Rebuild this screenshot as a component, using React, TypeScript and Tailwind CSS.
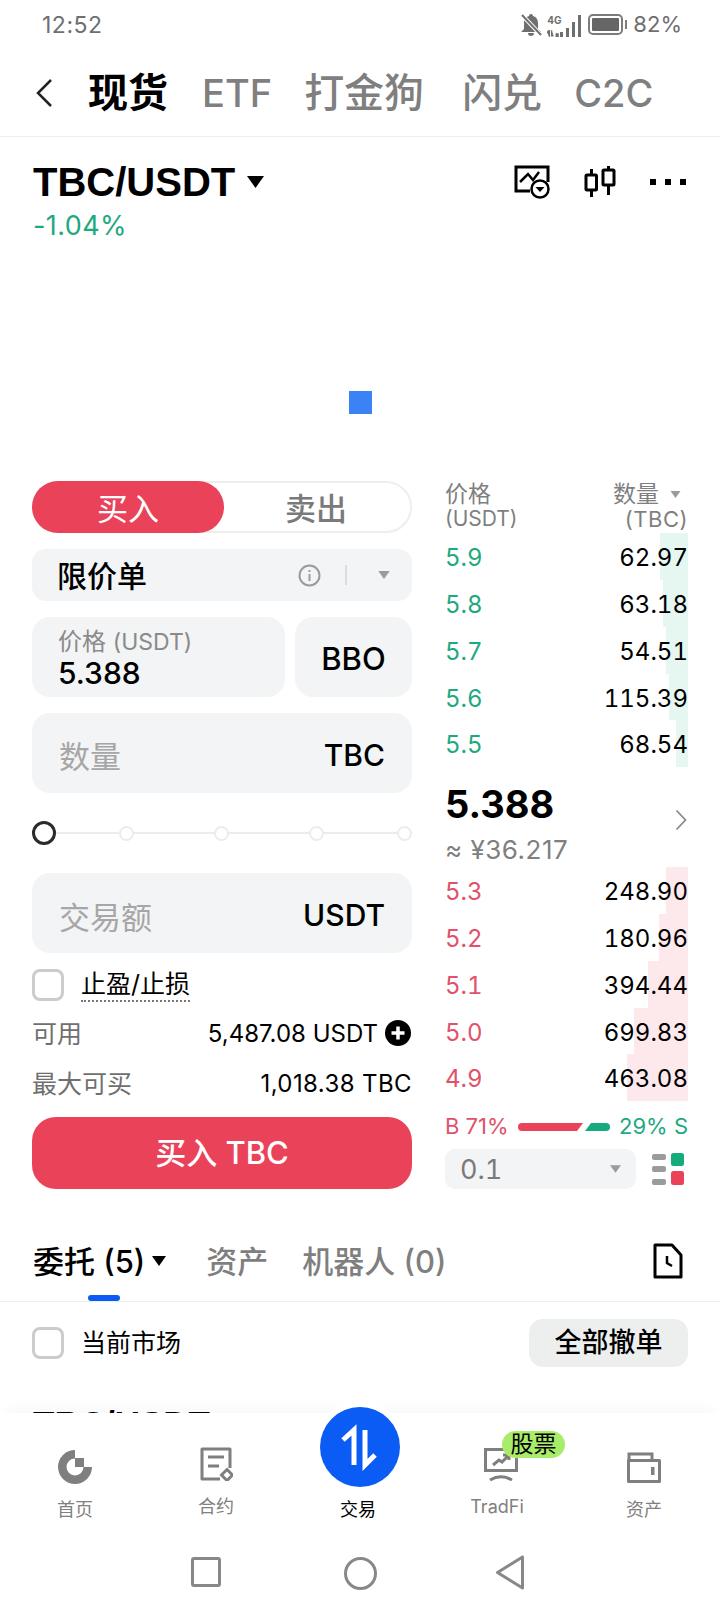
import React from "react";

const Caret = ({ w, h, color }: { w: number; h: number; color: string }) => (
  <svg width={w} height={h} viewBox="0 0 10 7"><path d="M0 0H10L5 7Z" fill={color} /></svg>
);

const asks = [["5.9", "62.97", 28], ["5.8", "63.18", 25], ["5.7", "54.51", 22], ["5.6", "115.39", 19], ["5.5", "68.54", 12]] as const;
const bids = [["5.3", "248.90", 22], ["5.2", "180.96", 29], ["5.1", "394.44", 40], ["5.0", "699.83", 54], ["4.9", "463.08", 61]] as const;

function BookRow({ p, q, w, up }: { p: string; q: string; w: number; up: boolean }) {
  return (
    <div className="relative flex h-[46.8px] items-center justify-between pt-[3px] text-[24px] tabular-nums">
      <div className={up ? "absolute top-0 right-0 bottom-0 bg-[#e6f7f1]" : "absolute top-0 right-0 bottom-0 bg-[#fde8ec]"} style={{ width: `${w}px` }} />
      <span className={up ? "relative text-[#1fa97f]" : "relative text-[#e0526a]"}>{p}</span>
      <span className="relative text-black">{q}</span>
    </div>
  );
}

function Field({ label, unit, ph }: { label: string; unit: string; ph: number }) {
  return (
    <div className="flex h-[80px] items-center justify-between rounded-[18px] bg-[#f3f4f5] pt-[3px] pr-[27px] pl-[27px]">
      <span className="text-[31px] leading-none text-[#a6a6a6]" style={{ marginTop: ph }}>{label}</span>
      <span className="text-[30px] font-medium leading-none text-black">{unit}</span>
    </div>
  );
}

const NavLabel = ({ children, dark }: { children: React.ReactNode; dark?: boolean }) => (
  <span className={dark ? "flex h-[24px] items-center pt-[3px] text-[18px] text-black" : "flex h-[24px] items-center pt-[3px] text-[18px] text-[#808080]"}>{children}</span>
);

export default function App() {
  return (
    <div className="flex h-[1612px] w-[720px] flex-col overflow-hidden bg-white font-['Inter','Noto_Sans_CJK_SC',sans-serif] text-black">
      {/* status bar */}
      <div className="flex h-[48px] items-center justify-between pt-[2px] pr-[38px] pl-[42px] text-[#6f6f6f]">
        <span className="text-[23px] tracking-[0.5px]">12:52</span>
        <div className="flex items-center">
          <svg width="22" height="24" viewBox="0 0 22 24">
            <path d="M11 1a2 2 0 0 1 2 2c3.500 1 5 4 5 7v6l3 3H1l3-3v-6c0-3 1.500-6 5-7a2 2 0 0 1 2-2ZM8 20h6a3 3 0 0 1-6 0Z" fill="#6f6f6f" />
            <path d="M2 2L21 22" stroke="white" strokeWidth="4" />
            <path d="M2 2L21 22" stroke="#6f6f6f" strokeWidth="2" />
          </svg>
          <div className="ml-[5px] flex h-[24px] w-[34px] items-end">
            <div className="flex h-[22px] w-[12px] flex-col justify-between">
              <span className="text-[10px] leading-[11px] font-bold">4G</span>
              <svg width="12" height="7" viewBox="0 0 13 7"><path d="M2.500 7V0L0 2.500M5 0V6H7M10 7h2V4h-2Z" stroke="#6f6f6f" strokeWidth="1.500" fill="#6f6f6f" /></svg>
            </div>
            <svg width="21" height="22" viewBox="0 0 21 22" className="ml-[1px]"><path d="M0 17h3v5H0ZM6 13h3v9H6ZM12 7h3v15h-3ZM18 0h3v22h-3Z" fill="#6f6f6f" /></svg>
          </div>
          <div className="ml-[7px] flex h-[21px] w-[35px] items-center rounded-[5px] border-2 border-[#7c7c7c] p-[2px]">
            <div className="h-full w-full rounded-[1px] bg-[#666666]" />
          </div>
          <div className="ml-[2px] h-[9px] w-[2px] bg-[#7c7c7c]" />
          <span className="ml-[6px] text-[22px]">82%</span>
        </div>
      </div>

      {/* tabs */}
      <div className="flex h-[89px] items-center border-b border-[#ededed] pt-[2px]">
        <svg width="18" height="30" viewBox="0 0 18 30" className="ml-[35px]"><path d="M16 2L3 15L16 28" stroke="#222222" strokeWidth="2.500" fill="none" /></svg>
        <span className="ml-[35px] text-[40px] leading-none font-bold">现货</span>
        <span className="ml-[34px] text-[38px] leading-none font-medium text-[#7f7f7f]">ETF</span>
        <span className="ml-[32px] text-[40px] leading-none font-medium text-[#7f7f7f]">打金狗</span>
        <span className="ml-[38px] text-[40px] leading-none font-medium text-[#7f7f7f]">闪兑</span>
        <span className="ml-[32px] text-[38px] leading-none font-medium text-[#7f7f7f]">C2C</span>
      </div>

      {/* pair + chart */}
      <div className="flex h-[345px] flex-col px-[33px] pt-[24px]">
        <div className="flex h-[42px] items-center">
          <span className="font-['Liberation_Sans',sans-serif] text-[40px] leading-none font-bold">TBC/USDT</span>
          <span className="ml-[12px]"><Caret w={17} h={12} color="#000" /></span>
          <svg width="36" height="34" viewBox="0 0 36 34" className="ml-auto">
            <path d="M16 26H2V2H34V17" stroke="#000" strokeWidth="3" fill="none" />
            <path d="M6 17L14 9L19 15L25 7" stroke="#000" strokeWidth="2.500" fill="none" />
            <circle cx="26" cy="24" r="8.500" stroke="#000" strokeWidth="2.500" fill="#fff" />
            <path d="M21.500 22H30.500L26 27Z" fill="#000" />
          </svg>
          <svg width="32" height="32" viewBox="0 0 32 32" className="ml-[34px]">
            <path d="M7.500 3V8M7.500 25V31M24.500 0V4M24.500 19V29" stroke="#000" strokeWidth="3" />
            <rect x="2" y="9" width="10.500" height="15" rx="1" stroke="#000" strokeWidth="3" fill="none" />
            <rect x="19" y="4" width="11" height="15" rx="1" stroke="#000" strokeWidth="3" fill="none" />
          </svg>
          <div className="mr-[1px] ml-[34px] flex gap-[9px]">
            <span className="h-[6px] w-[6px] bg-black" />
            <span className="h-[6px] w-[6px] bg-black" />
            <span className="h-[6px] w-[6px] bg-black" />
          </div>
        </div>
        <span className="mt-[8px] text-[27px] leading-[30px] tracking-[0.4px] text-[#1fa97f]">-1.04%</span>
        <div className="mt-[150px] ml-[316px] h-[23px] w-[23px] bg-[#3b82f6]" />
      </div>

      {/* trade */}
      <div className="flex h-[708px]">
        <div className="ml-[32px] flex w-[380px] flex-col">
          <div className="flex h-[52px] rounded-full border-2 border-[#eeeeee]">
            <div className="-m-[2px] flex h-[52px] w-[192px] items-center justify-center rounded-full bg-[#ea4259] pt-[3px] text-[31px] text-white">买入</div>
            <div className="flex flex-1 items-center justify-center pt-[3px] text-[31px] font-medium text-[#7a7a7a]">卖出</div>
          </div>
          <div className="mt-[16px] flex h-[52px] items-center rounded-[14px] bg-[#f3f4f5] pr-[22px] pl-[25px]">
            <span className="pt-[2px] text-[30px] font-medium">限价单</span>
            <svg width="23" height="23" viewBox="0 0 23 23" className="ml-auto">
              <circle cx="11.500" cy="11.500" r="10" stroke="#9b9b9b" strokeWidth="2" fill="none" />
              <path d="M11.500 10V17M11.500 6V8" stroke="#9b9b9b" strokeWidth="2" />
            </svg>
            <div className="ml-[24px] h-[20px] w-[2px] bg-[#dcdcdc]" />
            <span className="ml-[31px]"><Caret w={12} h={8} color="#9b9b9b" /></span>
          </div>
          <div className="mt-[16px] flex h-[80px] gap-[10px]">
            <div className="flex flex-1 flex-col rounded-[18px] bg-[#f3f4f5] pt-[10px] pl-[26px]">
              <span className="text-[24px] leading-[30px] text-[#8a8a8a]">价格 <span className="text-[23px]">(USDT)</span></span>
              <span className="text-[30px] leading-[32px] font-medium">5.388</span>
            </div>
            <div className="flex w-[117px] items-center justify-center rounded-[18px] bg-[#f3f4f5] pt-[3px] text-[31px] font-medium">BBO</div>
          </div>
          <div className="mt-[16px]"><Field label="数量" unit="TBC" ph={4} /></div>
          <div className="flex h-[80px] items-center">
            <div className="relative flex h-[24px] w-full items-center">
              <div className="absolute right-0 left-0 h-[2px] bg-[#ececec]" />
              <span className="relative h-[24px] w-[24px] rounded-full border-[3px] border-[#2b2b2b] bg-white" />
              <span className="relative ml-[63px] h-[15px] w-[15px] rounded-full border-2 border-[#ececec] bg-white" />
              <span className="relative ml-[80px] h-[15px] w-[15px] rounded-full border-2 border-[#ececec] bg-white" />
              <span className="relative ml-[80px] h-[15px] w-[15px] rounded-full border-2 border-[#ececec] bg-white" />
              <span className="relative ml-auto h-[15px] w-[15px] rounded-full border-2 border-[#ececec] bg-white" />
            </div>
          </div>
          <Field label="交易额" unit="USDT" ph={6} />
          <div className="mt-[16px] flex h-[32px] items-center">
            <span className="h-[32px] w-[32px] rounded-[8px] border-[3px] border-[#cccccc]" />
            <span className="ml-[17px] border-b-2 border-dotted border-[#777777] pt-[1px] text-[25px] leading-[31px] font-normal">止盈/止损</span>
          </div>
          <div className="mt-[8px] flex h-[50px] items-center text-[24px]">
            <span className="text-[25px] text-[#6f6f6f]">可用</span>
            <span className="ml-auto">5,487.08 USDT</span>
            <svg width="26" height="26" viewBox="0 0 26 26" className="mr-[1px] ml-[7px] -mt-[2px]">
              <circle cx="13" cy="13" r="13" fill="#000" />
              <path d="M6.500 13H19.500M13 6.500V19.500" stroke="#fff" strokeWidth="3.500" />
            </svg>
          </div>
          <div className="flex h-[50px] items-center justify-between text-[24px]">
            <span className="text-[25px] text-[#6f6f6f]">最大可买</span>
            <span className="tracking-[0.4px]">1,018.38 TBC</span>
          </div>
          <div className="mt-[8px] flex h-[72px] items-center justify-center rounded-[24px] bg-[#ea4259] text-[31px] font-medium text-white">买入 TBC</div>
        </div>

        <div className="ml-[33px] flex w-[243px] flex-col">
          <div className="flex h-[52px] justify-between text-[#7f7f7f]">
            <div className="flex flex-col">
              <span className="text-[23px] leading-[26px]">价格</span>
              <span className="text-[21px] leading-[24px]">(USDT)</span>
            </div>
            <div className="flex flex-col items-end">
              <span className="flex items-center text-[23px] leading-[26px]">数量<span className="mr-[7px] ml-[11px]"><Caret w={11} h={7} color="#9b9b9b" /></span></span>
              <span className="text-[22px] leading-[24px] tracking-[0.5px]">(TBC)</span>
            </div>
          </div>
          {asks.map(([p, q, w]) => <BookRow key={p} p={p} q={q} w={w} up />)}
          <div className="flex h-[100px] flex-col pt-[15px]">
            <div className="flex h-[44px] items-center">
              <span className="text-[38px] leading-none font-bold">5.388</span>
              <svg width="12" height="22" viewBox="0 0 12 22" className="mt-[32px] mr-[1px] ml-auto"><path d="M1.500 1.500L10.500 11L1.500 20.500" stroke="#8a8a8a" strokeWidth="1.800" fill="none" /></svg>
            </div>
            <span className="mt-[9px] text-[26px] leading-[30px] tracking-[0.5px] text-[#7f7f7f]">≈ ¥36.217</span>
          </div>
          {bids.map(([p, q, w]) => <BookRow key={p} p={p} q={q} w={w} up={false} />)}
          <div className="flex h-[48px] items-center pt-[3px] text-[22px]">
            <span className="text-[#e0526a]">B 71%</span>
            <svg width="92" height="10" viewBox="0 0 92 10" className="ml-[9px]">
              <path d="M4 1H65L59 9H4a4 4 0 0 1 0-8Z" fill="#ea4259" />
              <path d="M73 1H88a4 4 0 0 1 0 8H67Z" fill="#15ab7d" />
            </svg>
            <span className="ml-auto text-[#1fa97f]">29% S</span>
          </div>
          <div className="flex h-[40px] items-center">
            <div className="flex h-[40px] w-[191px] items-center justify-between rounded-[10px] bg-[#f3f4f5] pr-[15px] pl-[15px]">
              <span className="pt-[2px] text-[27px] tabular-nums text-[#7a7a7a]">0.1</span>
              <Caret w={11} h={8} color="#9b9b9b" />
            </div>
            <svg width="32" height="32" viewBox="0 0 32 32" className="ml-[16px]">
              <rect x="0" y="1" width="14" height="6" rx="2" fill="#9b9b9b" />
              <rect x="0" y="13" width="14" height="6" rx="2" fill="#9b9b9b" />
              <rect x="0" y="26" width="14" height="6" rx="2" fill="#9b9b9b" />
              <rect x="19" y="0" width="13" height="13" rx="2.500" fill="#15ab7d" />
              <rect x="19" y="18" width="13" height="14" rx="2.500" fill="#ea4259" />
            </svg>
          </div>
        </div>
      </div>

      {/* order tabs */}
      <div className="flex h-[113px] flex-col border-b border-[#eeeeee]">
        <div className="mt-[52px] flex h-[40px] items-center pl-[33px]">
          <span className="text-[31px] leading-none font-medium">委托 (5)</span>
          <span className="ml-[7px]"><Caret w={14} h={10} color="#000" /></span>
          <span className="ml-[40px] text-[31px] leading-none font-medium text-[#7f7f7f]">资产</span>
          <span className="ml-[34px] text-[31px] leading-none font-medium text-[#7f7f7f]">机器人 (0)</span>
          <svg width="30" height="36" viewBox="0 0 30 36" className="mr-[37px] ml-auto">
            <path d="M2 2H19L28 12V34H2Z" stroke="#000" strokeWidth="3" fill="none" strokeLinejoin="round" />
            <path d="M14 13V20L19 23" stroke="#000" strokeWidth="2.500" fill="none" />
          </svg>
        </div>
        <div className="mt-auto ml-[88px] h-[6px] w-[32px] rounded-[3px] bg-[#0b5cf5]" />
      </div>
      <div className="flex h-[65px] items-end justify-between pr-[32px] pl-[32px]">
        <div className="mb-[8px] flex items-center">
          <span className="h-[32px] w-[32px] rounded-[8px] border-[3px] border-[#cccccc]" />
          <span className="ml-[17px] text-[25px] leading-none">当前市场</span>
        </div>
        <div className="flex h-[48px] w-[159px] items-center justify-center rounded-[14px] bg-[#edeeee] text-[27px] font-medium">全部撤单</div>
      </div>
      <div className="h-[46px] overflow-hidden pt-[39px] pl-[33px] font-['Liberation_Sans',sans-serif] text-[35px] leading-[36px] font-bold">TBC/USDT</div>

      {/* bottom nav */}
      <div className="relative flex h-[199px] flex-col bg-white shadow-[0_-13px_10px_-6px_rgba(0,0,0,0.025)]">
        <div className="absolute top-[-6px] left-[320px] flex h-[80px] w-[80px] items-center justify-center rounded-full bg-[#0b5cf5] shadow-[0_0_0_6px_white]">
          <svg width="80" height="80" viewBox="0 0 80 80">
            <path d="M23 33L34 23V58" stroke="#fff" strokeWidth="5" fill="none" />
            <path d="M45 23V58L55 48" stroke="#fff" strokeWidth="5" fill="none" />
          </svg>
        </div>
        <div className="flex h-[130px] items-start">
          <div className="ml-[15px] flex w-[120px] flex-col items-center pt-[37px]">
            <svg width="34" height="34" viewBox="0 0 34 34">
              <path d="M17 0A17 17 0 1 0 34 17H25.500A8.500 8.500 0 1 1 17 8.500Z" fill="#7f7f7f" />
              <rect x="17" y="8" width="9" height="9" fill="#7f7f7f" />
            </svg>
            <span className="mt-[12px]"><NavLabel>首页</NavLabel></span>
          </div>
          <div className="ml-[21px] flex w-[120px] flex-col items-center pt-[34px]">
            <svg width="34" height="34" viewBox="0 0 34 34">
              <path d="M21 32H3V2H31V21" stroke="#7f7f7f" strokeWidth="3" fill="none" strokeLinejoin="round" />
              <path d="M9 10H25M9 19H20" stroke="#7f7f7f" strokeWidth="3" />
              <path d="M28 22.500L33.500 28L28 33.500L22.500 28Z" stroke="#7f7f7f" strokeWidth="3" fill="#fff" />
            </svg>
            <span className="mt-[12px]"><NavLabel>合约</NavLabel></span>
          </div>
          <div className="ml-[24px] flex w-[116px] flex-col items-center pt-[83px]">
            <NavLabel dark>交易</NavLabel>
          </div>
          <div className="relative ml-[21px] flex w-[120px] flex-col items-center pt-[35px]">
            <svg width="34" height="34" viewBox="0 0 34 34" className="ml-[7px]">
              <rect x="1.500" y="1.500" width="31" height="21" stroke="#7f7f7f" strokeWidth="3" fill="none" />
              <path d="M9 17L15 12L18 14L24 8M19 7H25V12" stroke="#7f7f7f" strokeWidth="3" fill="none" />
              <path d="M6 32C13 28 21 28 28 32" stroke="#7f7f7f" strokeWidth="3" fill="none" />
            </svg>
            <span className="mt-[11px]"><NavLabel>TradFi</NavLabel></span>
            <div className="absolute top-[18px] left-[65px] flex h-[27px] w-[63px] items-center justify-center rounded-full bg-[#a9ec6a] text-[23px] leading-none">股票</div>
          </div>
          <div className="ml-[27px] flex w-[120px] flex-col items-center pt-[38px]">
            <svg width="34" height="32" viewBox="0 0 34 32">
              <path d="M2 10V3H25V10" stroke="#7f7f7f" strokeWidth="3" fill="none" />
              <rect x="1.500" y="9.500" width="31" height="21" stroke="#7f7f7f" strokeWidth="3" fill="none" strokeLinejoin="round" />
              <rect x="24" y="16" width="3.500" height="8" fill="#7f7f7f" />
            </svg>
            <span className="mt-[13px]"><NavLabel>资产</NavLabel></span>
          </div>
        </div>
        <div className="flex h-[69px] items-start pt-[14px]">
          <div className="ml-[191px] h-[30px] w-[30px] rounded-[3px] border-[3px] border-[#888888]" />
          <div className="ml-[123px] h-[33px] w-[33px] rounded-full border-[3px] border-[#888888]" />
          <svg width="30" height="35" viewBox="0 0 30 35" className="ml-[118px] -mt-[2px]">
            <path d="M2.500 17.500L27.500 2V33Z" stroke="#888888" strokeWidth="3" fill="none" strokeLinejoin="round" />
          </svg>
        </div>
      </div>
    </div>
  );
}
